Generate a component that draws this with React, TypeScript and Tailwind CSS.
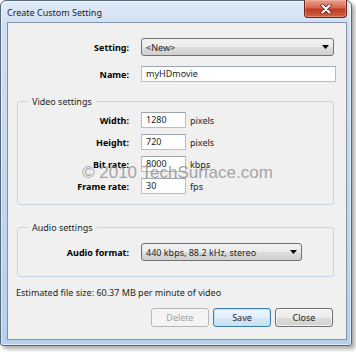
import React from 'react';

const FONT = "font-['Noto_Sans','DejaVu_Sans',sans-serif]";

function Arrow() {
  return (
    <svg width="7" height="4" viewBox="0 0 7 4">
      <path d="M0 0H7L3.5 4Z" fill="#000" />
    </svg>
  );
}

function TextBox({ value, className }: { value: string; className: string }) {
  return (
    <div
      className={`flex h-[16px] items-center border border-[#b8bcc3] border-t-[#9ea4ad] bg-white pl-[4px] leading-[14px] text-[#1e1e1e] ${className}`}
    >
      {value}
    </div>
  );
}

function DropDown({ value, className }: { value: string; className: string }) {
  return (
    <div
      className={`flex h-[18px] items-center justify-between rounded-[3px] border border-[#707070] bg-[linear-gradient(#f3f3f3_0%,#ebebeb_50%,#dddddd_51%,#d0d0d0_100%)] pl-[4px] pr-[4px] text-[#1e1e1e] ${className}`}
    >
      <span>{value}</span>
      <Arrow />
    </div>
  );
}

function Button({ label, variant }: { label: string; variant?: 'default' | 'disabled' }) {
  if (variant === 'disabled') {
    return (
      <div className="flex h-[19px] w-[58px] items-center justify-center rounded-[3px] border border-[#b5b9bc] bg-[#f4f4f4] text-[#a3a3a3]">
        {label}
      </div>
    );
  }
  if (variant === 'default') {
    return (
      <div className="flex h-[19px] w-[58px] items-center justify-center rounded-[3px] border border-[#3c7fb1] bg-[linear-gradient(#eef6fc_0%,#e4f0fa_50%,#d6e9f7_51%,#c9dff1_100%)] text-[#1e1e1e] shadow-[inset_0_0_0_1px_#bfe3f7]">
        {label}
      </div>
    );
  }
  return (
    <div className="flex h-[19px] w-[58px] items-center justify-center rounded-[3px] border border-[#707070] bg-[linear-gradient(#f3f3f3_0%,#ebebeb_50%,#dddddd_51%,#d0d0d0_100%)] text-[#1e1e1e] shadow-[inset_0_0_0_1px_rgba(255,255,255,0.7)]">
      {label}
    </div>
  );
}

function GroupRow({ label, value, unit }: { label: string; value: string; unit: string }) {
  return (
    <div className="flex h-[22px] items-center">
      <div className="w-[111px] text-right font-bold text-black">{label}</div>
      <TextBox value={value} className="ml-[12px] w-[45px]" />
      <div className="ml-[4px] text-[#1e1e1e]">{unit}</div>
    </div>
  );
}

export default function App() {
  return (
    <div className={`relative h-[352px] w-[356px] bg-white text-[9px] leading-[15px] ${FONT}`}>
      {/* window frame */}
      <div className="flex h-[346px] w-[352px] flex-col rounded-t-[6px] rounded-b-[3px] border border-[#58687b] bg-[linear-gradient(#dfeaf7_0%,#cfdff2_8%,#c0d6ef_60%,#b6cfee_100%)] pb-[5px] pl-[6px] pr-[4px] shadow-[3px_3px_4px_rgba(0,0,0,0.35),inset_0_0_0_1px_rgba(255,255,255,0.55)]">
        {/* title bar */}
        <div className="flex h-[21px] items-start">
          <div className="pt-[4px] text-[9px] leading-[15px] text-[#1b1b1b]">Create Custom Setting</div>
          <div className="-mt-[1px] ml-auto flex h-[18px] w-[43px] items-center justify-center rounded-b-[4px] border border-t-0 border-[#6e2317] bg-[linear-gradient(#e7a08f_0%,#d7664f_45%,#c23a20_55%,#cf6247_100%)] shadow-[inset_0_0_0_1px_rgba(255,200,185,0.4)]">
            <svg width="12" height="10" viewBox="0 0 12 10">
              <path d="M2.5 1.5L9.5 8.5M9.5 1.5L2.5 8.5" stroke="#5a1f18" strokeWidth="3.8" strokeLinecap="round" />
              <path d="M2.5 1.5L9.5 8.5M9.5 1.5L2.5 8.5" stroke="#ffffff" strokeWidth="2.2" strokeLinecap="round" />
            </svg>
          </div>
        </div>

        {/* client area */}
        <div className="flex h-[318px] w-[340px] flex-col border border-[#8093a8] bg-[#f0f0f0] pt-[13px]">
          <div className="flex h-[22px] items-center">
            <div className="w-[121px] text-right font-bold text-black">Setting:</div>
            <DropDown value="<New>" className="ml-[12px] w-[193px]" />
          </div>
          <div className="mt-[5px] flex h-[22px] items-center">
            <div className="w-[121px] text-right font-bold text-black">Name:</div>
            <TextBox value="myHDmovie" className="ml-[12px] w-[195px]" />
          </div>

          <fieldset className="mt-[9px] ml-[9px] w-[317px] rounded-[3px] border border-[#c6d4e4] p-0">
            <legend className="ml-[10px] px-[4px] leading-[15px] text-[#1e1e1e]">Video settings</legend>
            <div className="pb-[7px]">
              <GroupRow label="Width:" value="1280" unit="pixels" />
              <GroupRow label="Height:" value="720" unit="pixels" />
              <GroupRow label="Bit rate:" value="8000" unit="kbps" />
              <GroupRow label="Frame rate:" value="30" unit="fps" />
            </div>
          </fieldset>

          <fieldset className="mt-[15px] ml-[9px] w-[317px] rounded-[3px] border border-[#c6d4e4] p-0">
            <legend className="ml-[10px] px-[4px] leading-[15px] text-[#1e1e1e]">Audio settings</legend>
            <div className="pt-[7px] pb-[14px]">
              <div className="flex h-[20px] items-center">
                <div className="w-[111px] text-right font-bold text-black">Audio format:</div>
                <DropDown value="440 kbps, 88.2 kHz, stereo" className="ml-[12px] w-[161px]" />
              </div>
            </div>
          </fieldset>

          <div className="mt-[8px] pl-[8px] text-[#1e1e1e]">Estimated file size: 60.37 MB per minute of video</div>

          <div className="mt-[8px] flex justify-end gap-[4px] pr-[13px]">
            <Button label="Delete" variant="disabled" />
            <Button label="Save" variant="default" />
            <Button label="Close" />
          </div>
        </div>
      </div>

      {/* watermark */}
      <div className="pointer-events-none absolute left-[82px] top-[163px] font-['Liberation_Sans',sans-serif] text-[17px] leading-[20px] text-[#8a8a8a] opacity-75">
        © 2010 TechSurface.com
      </div>
    </div>
  );
}
